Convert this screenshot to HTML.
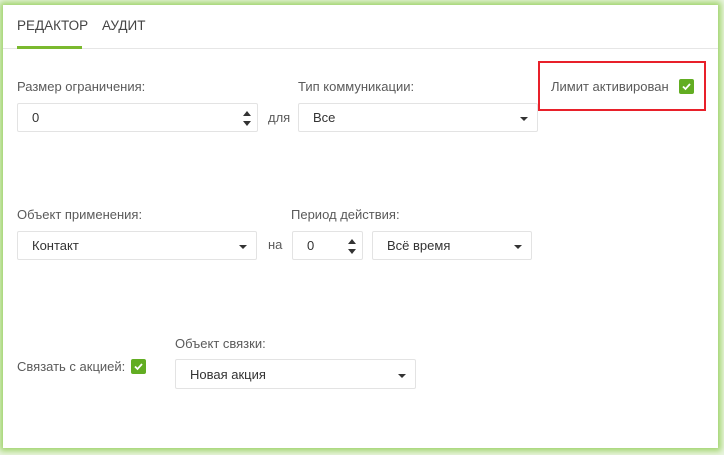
<!DOCTYPE html><html><head><meta charset="utf-8"><style>
body{margin:0;width:724px;height:455px;background:#eaf5e0;font-family:"Liberation Sans",sans-serif;font-size:13px;color:#555;position:relative;overflow:hidden}
.panel{position:absolute;left:3px;top:5px;width:715px;height:443px;background:#fff;box-shadow:0 0 6px 3px #9fd36a}
.a{position:absolute}
.lbl{position:absolute;font-size:13px;color:#5a5a5a}
.box{position:absolute;height:29px;border:1px solid #e3e3e3;border-radius:2px;background:#fff;box-sizing:border-box;font-size:13px;color:#333;line-height:28px;padding-left:14px}
.caret{position:absolute;right:9px;top:13px;width:0;height:0;border-left:4px solid transparent;border-right:4px solid transparent;border-top:4px solid #333}
.spin{position:absolute;right:6px;top:7px;width:0;height:0;border-left:4px solid transparent;border-right:4px solid transparent;border-bottom:5px solid #333}
.spin2{position:absolute;right:6px;top:17px;width:0;height:0;border-left:4px solid transparent;border-right:4px solid transparent;border-top:5px solid #333}
.cb{position:absolute;width:15px;height:15px;background:#62ad22;border-radius:2px}
.cb svg{position:absolute;left:2px;top:2px}
</style></head><body>
<div class="panel"></div>
<div class="lbl" style="left:17px;top:18px;font-size:13.5px;color:#444">РЕДАКТОР</div>
<div class="lbl" style="left:102px;top:18px;font-size:13.5px;color:#444">АУДИТ</div>
<div class="a" style="left:3px;top:48px;width:715px;height:1px;background:#e6e6e6"></div>
<div class="a" style="left:17px;top:46px;width:65px;height:3px;background:#7ab92e"></div>

<div class="lbl" style="left:17px;top:79px">Размер ограничения:</div>
<div class="box" style="left:17px;top:103px;width:241px">0<div class="spin"></div><div class="spin2"></div></div>
<div class="lbl" style="left:268px;top:110px">для</div>
<div class="lbl" style="left:298px;top:79px">Тип коммуникации:</div>
<div class="box" style="left:298px;top:103px;width:240px">Все<div class="caret"></div></div>
<div class="a" style="left:538px;top:61px;width:168px;height:50px;border:2px solid #e8202a;box-sizing:border-box"></div>
<div class="lbl" style="left:551px;top:79px">Лимит активирован</div>
<div class="cb" style="left:679px;top:79px"><svg width="11" height="11" viewBox="0 0 11 11"><path d="M2 5.5l2.5 2.5 4.5-5" stroke="#fff" stroke-width="1.8" fill="none"/></svg></div>

<div class="lbl" style="left:17px;top:207px">Объект применения:</div>
<div class="box" style="left:17px;top:231px;width:240px">Контакт<div class="caret"></div></div>
<div class="lbl" style="left:268px;top:237px">на</div>
<div class="lbl" style="left:291px;top:207px">Период действия:</div>
<div class="box" style="left:292px;top:231px;width:71px">0<div class="spin"></div><div class="spin2"></div></div>
<div class="box" style="left:372px;top:231px;width:160px">Всё время<div class="caret"></div></div>

<div class="lbl" style="left:17px;top:359px">Связать с акцией:</div>
<div class="cb" style="left:131px;top:359px"><svg width="11" height="11" viewBox="0 0 11 11"><path d="M2 5.5l2.5 2.5 4.5-5" stroke="#fff" stroke-width="1.8" fill="none"/></svg></div>
<div class="lbl" style="left:175px;top:336px">Объект связки:</div>
<div class="box" style="left:175px;top:359px;width:241px;height:30px;line-height:30px">Новая акция<div class="caret" style="top:14px"></div></div>
</body></html>
